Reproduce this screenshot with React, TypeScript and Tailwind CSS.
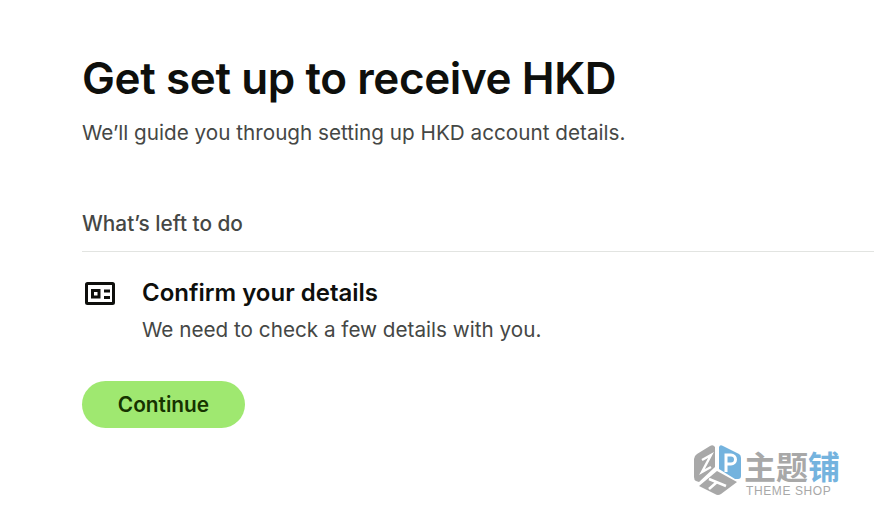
import React from 'react';

function DetailsIcon() {
  return (
    <svg width="32" height="24" viewBox="0 0 32 24" fill="none" className="shrink-0">
      <rect x="2.5" y="2.5" width="27" height="20" rx="1" stroke="#0e0f0c" strokeWidth="3" />
      <rect x="8.5" y="9.5" width="6.5" height="6.5" stroke="#0e0f0c" strokeWidth="3" />
      <path d="M20 10h6M20 16.5h6" stroke="#0e0f0c" strokeWidth="2.8" />
    </svg>
  );
}

function Watermark() {
  return (
    <div className="absolute left-[693px] top-[444px] flex items-start gap-[1px]">
      <svg width="50" height="54" viewBox="0 0 50 54">
        <path d="M17 2 Q20 0 22 3 L22 23 L6 38 L3 37 Q1 36 1 33 L1 15 Q1 12 4 10 Z" fill="#a8a8a8" />
        <path d="M26 3 Q27 0 30 2 L46 10 Q48 11 48 14 L48 32 Q48 35 45 35 L42 35 L26 25 Z" fill="#74b3de" />
        <path d="M6 42 L24 27 L44 38 L28 50 Q25 52 22 50 Z" fill="#a8a8a8" />
        <path d="M33 28 V11 H38 A4.5 4.5 0 0 1 38 20 H33" stroke="#fff" strokeWidth="3" fill="none" />
        <path d="M9 16 L18 11 L9 28 L18 23" stroke="#fff" strokeWidth="2.4" fill="none" />
        <path d="M16 35 L33 42 M24 38 L16 45" stroke="#fff" strokeWidth="2.6" fill="none" />
      </svg>
      <div className="flex flex-col">
        <div className="mt-[4px] flex text-[32px] leading-[34px] font-bold font-['Noto_Sans_CJK_SC',sans-serif] text-[#a8a8a8]">
          <span>主题</span>
          <span className="text-[#74b3de]">铺</span>
        </div>
        <div className="mt-[2px] ml-[2px] text-[12px] leading-[14px] tracking-[0.6px] text-[#a8a8a8] font-['Liberation_Sans',sans-serif]">
          THEME SHOP
        </div>
      </div>
    </div>
  );
}

export default function App() {
  return (
    <div className="relative h-[522px] w-[874px] overflow-hidden bg-white pl-[82px] pt-[50px] font-['Inter',sans-serif]">
      <h1 className="text-[44px] leading-[56px] font-semibold tracking-[-0.4px] text-[#0e0f0c]">
        Get set up to receive HKD
      </h1>
      <p className="mt-[11px] text-[20.7px] leading-[32px] text-[#454745]">
        We’ll guide you through setting up HKD account details.
      </p>

      <div className="mt-[59px] border-b border-[#e2e4e1] pb-[11px]">
        <h2 className="text-[20.8px] leading-[32px] font-medium text-[#454745]">What’s left to do</h2>
      </div>

      <div className="mt-[25px] flex items-start gap-[26px] pl-[2px]">
        <div className="pt-[4px]">
          <DetailsIcon />
        </div>
        <div>
          <h3 className="text-[24px] leading-[32px] font-semibold text-[#0e0f0c]">Confirm your details</h3>
          <p className="mt-[5px] text-[20.7px] leading-[32px] text-[#454745]">We need to check a few details with you.</p>
        </div>
      </div>

      <button className="mt-[35px] h-[47px] w-[163px] rounded-full bg-[#9fe870] text-[20.8px] font-semibold text-[#163300]">
        Continue
      </button>

      <Watermark />
    </div>
  );
}
